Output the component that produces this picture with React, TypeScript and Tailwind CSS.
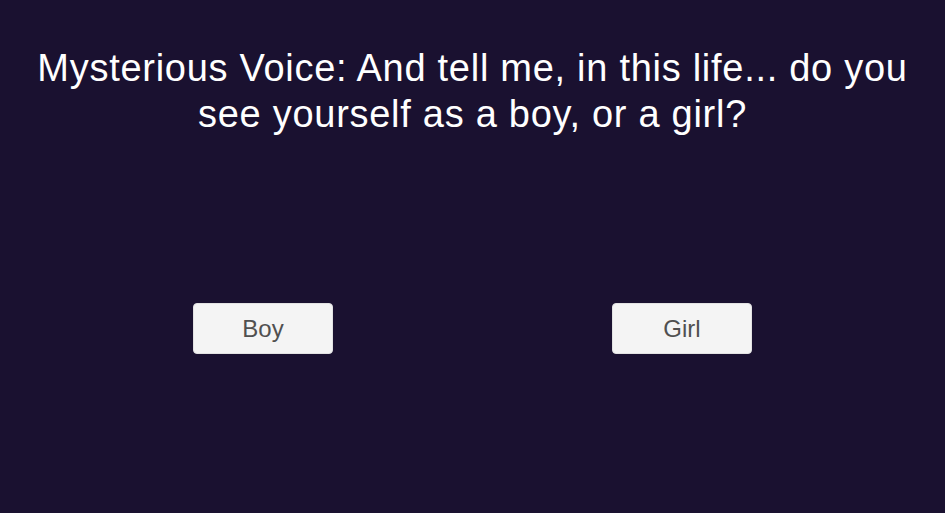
export default function App() {
  return (
    <div className="w-[945px] h-[513px] bg-[#1a1130] flex flex-col items-center" style={{ fontFamily: '"Liberation Sans", Arial, sans-serif' }}>
      <div className="mt-[45px] text-white text-[38px] leading-[46px] tracking-[0.72px] text-center w-[920px]">
        Mysterious Voice: And tell me, in this life... do you<br />see yourself as a boy, or a girl?
      </div>
      <div className="mt-[166px] flex gap-[279px]">
        <button className="w-[140px] h-[51px] rounded-[4px] bg-[#f4f4f4] text-[#505050] text-[24px] border border-[#e2e2e2]">Boy</button>
        <button className="w-[140px] h-[51px] rounded-[4px] bg-[#f4f4f4] text-[#505050] text-[24px] border border-[#e2e2e2]">Girl</button>
      </div>
    </div>
  );
}
